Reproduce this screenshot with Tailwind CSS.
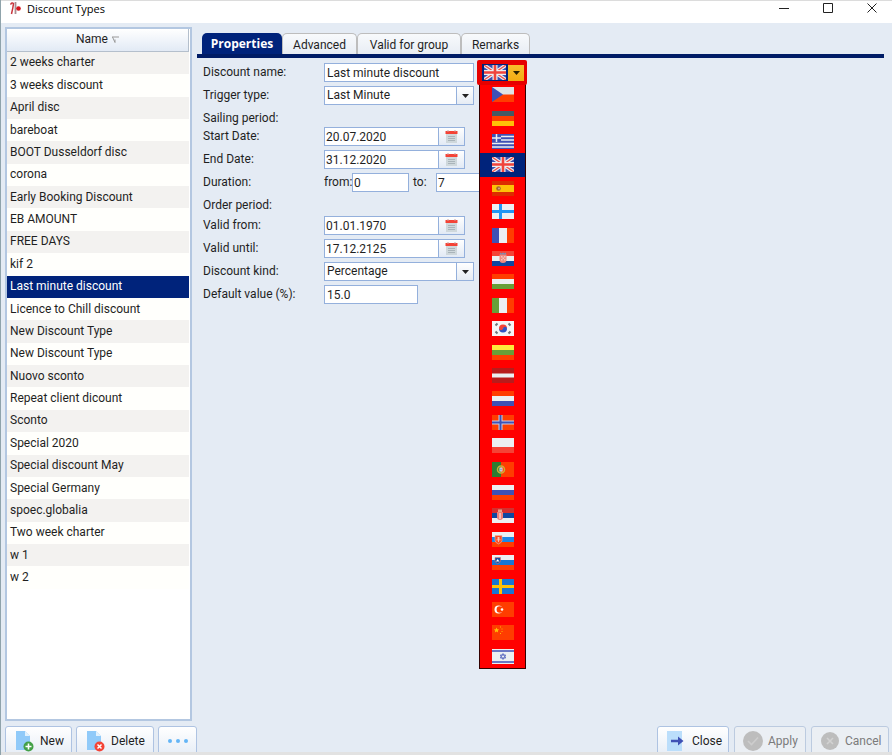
<!DOCTYPE html>
<html lang="en">
  <head>
    <meta charset="UTF-8" />
    <meta name="viewport" content="width=device-width, initial-scale=1.0" />
    <title>Discount Types</title>
    <script src="https://cdn.jsdelivr.net/npm/@tailwindcss/browser@4"></script>
  </head>
  <body
    class="flex flex-col h-screen overflow-hidden bg-[#e4ebf4] border-l border-[#8fa3ab] font-[Roboto,sans-serif] text-[12px] leading-[15px] text-[#1f1f1f]"
  >
    <header
      class="flex shrink-0 items-center justify-between h-[23px] pb-[8px] pl-[9px] bg-white border-t border-[#dcdcdc]"
    >
      <div class="flex items-center gap-[6px]">
        <svg class="w-[11px] h-[13px]" viewBox="0 0 11 13" fill="none">
          <path d="M0.5 2.5 Q2 0 3.5 1.5 Q3 6 1.5 12" stroke="#c8343c" stroke-width="1.5" />
          <path d="M5.500 0V12" stroke="#a98c90" stroke-width="1.8" />
          <circle cx="8.500" cy="6.500" r="2.3" fill="#d4141c" />
        </svg>
        <h1 class="font-['Open_Sans',sans-serif] text-[11px] text-black">Discount Types</h1>
      </div>
      <div class="flex items-center gap-[34px] pr-[15px]">
        <button aria-label="Minimize">
          <svg class="w-[10px] h-[10px]" viewBox="0 0 10 10"><path d="M0 5.500H10" stroke="#222" /></svg>
        </button>
        <button aria-label="Maximize">
          <svg class="w-[10px] h-[10px]" viewBox="0 0 10 10"><path d="M.5.5h9v9h-9z" fill="none" stroke="#222" /></svg>
        </button>
        <button aria-label="Close window">
          <svg class="w-[10px] h-[10px]" viewBox="0 0 10 10"><path d="M.5.5l9 9M9.500.5l-9 9" stroke="#222" /></svg>
        </button>
      </div>
    </header>

    <main class="flex flex-1 min-h-0 pt-[4px] pb-[5px] pl-[4px]">
      <aside class="shrink-0 w-[187px] bg-white border-2 border-[#b3c7e1] pr-[1px] overflow-hidden">
        <table class="w-full h-[560px] border-collapse">
          <thead>
            <tr>
              <th
                class="h-[22px] p-0 font-normal bg-linear-to-b from-white to-[#e2eaf5] border-b border-r border-[#b4bfcc]"
              >
                <button class="inline-flex items-center gap-[4px]">
                  Name
                  <svg class="w-[7px] h-[7px]" viewBox="0 0 7 7"><path d="M0 1H7M.5 1L3 6.500V3.500" fill="none" stroke="#999" /></svg>
                </button>
              </th>
            </tr>
          </thead>
          <tbody id="discounts"></tbody>
        </table>
      </aside>

      <section class="flex-1 pt-[6px] pl-[5px] pr-[8px]">
        <div class="flex h-[21px] pl-[5px]" role="tablist">
          <button
            role="tab"
            aria-selected="true"
            class="w-[80px] rounded-t-[5px] bg-[#00237b] text-white font-bold font-['Open_Sans',sans-serif] text-[12px]"
          >
            Properties
          </button>
          <button role="tab" class="w-[75px] pt-[2px] rounded-t-[5px] border border-b-0 border-[#bdbdbd] bg-linear-to-b from-[#f8fafc] to-[#e8edf4]">
            Advanced
          </button>
          <button role="tab" class="w-[104px] pt-[2px] rounded-t-[5px] border border-b-0 border-[#bdbdbd] bg-linear-to-b from-[#f8fafc] to-[#e8edf4]">
            Valid for group
          </button>
          <button role="tab" class="w-[69px] pt-[2px] rounded-t-[5px] border border-b-0 border-[#bdbdbd] bg-linear-to-b from-[#f8fafc] to-[#e8edf4]">
            Remarks
          </button>
        </div>
        <div class="h-[4px] bg-[#001c66]"></div>

        <form class="pl-[6px] pt-[5px]">
          <div class="grid gap-[4px]">
            <div class="flex items-center h-[19px]">
              <label for="name" class="w-[121px]">Discount name:</label>
              <input id="name" value="Last minute discount" class="w-[150px] h-[19px] px-[2px] bg-white border border-[#94b0dc]" />
              <div class="relative z-10 ml-[3px]">
                <button
                  type="button"
                  aria-label="Language"
                  class="relative z-10 flex items-center w-[50px] h-[25px] pl-[5px] bg-[#e60000] rounded-[2px]"
                >
                  <span class="flex items-center justify-center w-[26px] h-[17px] bg-[#00237b]" id="currentFlag"></span>
                  <span class="flex items-center justify-center w-[16px] h-[16px] bg-linear-to-b from-[#f8bd2c] to-[#f3ab10]">
                    <svg class="w-[7px] h-[4px]" viewBox="0 0 7 4"><path d="M0 0h7L3.500 4z" fill="#2a2000" /></svg>
                  </span>
                </button>
                <ul
                  id="flags"
                  role="listbox"
                  aria-label="Languages"
                  class="absolute top-[22px] left-[2px] grid auto-rows-fr w-[47px] h-[587px] bg-[#ff0000] border border-[#300]"
                ></ul>
              </div>
            </div>
            <div class="flex items-center h-[19px]">
              <label for="trigger" class="w-[121px]">Trigger type:</label>
              <div class="relative">
                <select id="trigger" class="block appearance-none w-[150px] h-[19px] px-[2px] bg-white border border-[#94b0dc]">
                  <option>Last Minute</option>
                </select>
                <span class="absolute inset-y-0 right-0 flex items-center justify-center w-[18px] border border-[#94b0dc] bg-linear-to-b from-white to-[#e6ecf4] pointer-events-none">
                  <svg class="w-[7px] h-[4px]" viewBox="0 0 7 4"><path d="M0 0h7L3.500 4z" fill="#222" /></svg>
                </span>
              </div>
            </div>
          </div>

          <h2 class="h-[22px] pt-[6px]">Sailing period:</h2>
          <div class="grid gap-[4px]">
            <div class="flex items-center h-[19px]">
              <label for="start" class="w-[121px]">Start Date:</label>
              <input id="start" value="20.07.2020" class="w-[115px] h-[19px] px-[1px] bg-white border border-[#94b0dc]" />
              <button type="button" aria-label="Pick start date" class="calendar flex items-center justify-center w-[26px] h-[19px] border border-l-0 border-[#94b0dc] bg-linear-to-b from-white to-[#e2eaf5]"></button>
            </div>
            <div class="flex items-center h-[19px]">
              <label for="end" class="w-[121px]">End Date:</label>
              <input id="end" value="31.12.2020" class="w-[115px] h-[19px] px-[1px] bg-white border border-[#94b0dc]" />
              <button type="button" aria-label="Pick end date" class="calendar flex items-center justify-center w-[26px] h-[19px] border border-l-0 border-[#94b0dc] bg-linear-to-b from-white to-[#e2eaf5]"></button>
            </div>
            <div class="flex items-center h-[19px]">
              <span class="w-[121px]">Duration:</span>
              <label for="from" class="w-[28px]">from:</label>
              <input id="from" value="0" class="w-[57px] h-[19px] px-[1px] bg-white border border-[#94b0dc]" />
              <label for="to" class="w-[27px] pl-[4px]">to:</label>
              <input id="to" value="7" class="w-[57px] h-[19px] px-[1px] bg-white border border-[#94b0dc]" />
            </div>
          </div>

          <h2 class="h-[24px] pt-[6px]">Order period:</h2>
          <div class="grid gap-[4px]">
            <div class="flex items-center h-[19px]">
              <label for="validFrom" class="w-[121px]">Valid from:</label>
              <input id="validFrom" value="01.01.1970" class="w-[115px] h-[19px] px-[1px] bg-white border border-[#94b0dc]" />
              <button type="button" aria-label="Pick valid from" class="calendar flex items-center justify-center w-[26px] h-[19px] border border-l-0 border-[#94b0dc] bg-linear-to-b from-white to-[#e2eaf5]"></button>
            </div>
            <div class="flex items-center h-[19px]">
              <label for="validUntil" class="w-[121px]">Valid until:</label>
              <input id="validUntil" value="17.12.2125" class="w-[115px] h-[19px] px-[1px] bg-white border border-[#94b0dc]" />
              <button type="button" aria-label="Pick valid until" class="calendar flex items-center justify-center w-[26px] h-[19px] border border-l-0 border-[#94b0dc] bg-linear-to-b from-white to-[#e2eaf5]"></button>
            </div>
            <div class="flex items-center h-[19px]">
              <label for="kind" class="w-[121px]">Discount kind:</label>
              <div class="relative">
                <select id="kind" class="block appearance-none w-[150px] h-[19px] px-[2px] bg-white border border-[#94b0dc]">
                  <option>Percentage</option>
                </select>
                <span class="absolute inset-y-0 right-0 flex items-center justify-center w-[18px] border border-[#94b0dc] bg-linear-to-b from-white to-[#e6ecf4] pointer-events-none">
                  <svg class="w-[7px] h-[4px]" viewBox="0 0 7 4"><path d="M0 0h7L3.500 4z" fill="#222" /></svg>
                </span>
              </div>
            </div>
            <div class="flex items-center h-[19px]">
              <label for="value" class="w-[121px]">Default value (%):</label>
              <input id="value" value="15.0" class="w-[94px] h-[19px] px-[2px] bg-white border border-[#94b0dc]" />
            </div>
          </div>
        </form>
      </section>
    </main>

    <footer class="flex shrink-0 justify-between h-[29px] pl-[4px] pr-[3px] border-b-3 border-[#e2e2e2] overflow-hidden">
      <div class="flex gap-[4px]">
        <button class="flex items-center gap-[6px] w-[67px] h-[30px] pl-[9px] rounded-[3px] border border-[#aec3e2] bg-linear-to-b from-white to-[#e6edf6]">
          <svg class="w-[19px] h-[21px]" viewBox="0 0 19 21">
            <path d="M1 0h9l5 5v14H1z" fill="#90caf9" />
            <path d="M10 0v5h5z" fill="#e1f1fd" />
            <circle cx="13.500" cy="15.500" r="5" fill="#43a047" />
            <path d="M13.500 12.500v6M10.500 15.500h6" stroke="#fff" stroke-width="1.600" />
          </svg>
          New
        </button>
        <button class="flex items-center gap-[6px] w-[78px] h-[30px] pl-[9px] rounded-[3px] border border-[#aec3e2] bg-linear-to-b from-white to-[#e6edf6]">
          <svg class="w-[19px] h-[21px]" viewBox="0 0 19 21">
            <path d="M1 0h9l5 5v14H1z" fill="#90caf9" />
            <path d="M10 0v5h5z" fill="#e1f1fd" />
            <circle cx="13.500" cy="15.500" r="5" fill="#f44336" />
            <path d="M11.500 13.500l4 4M15.500 13.500l-4 4" stroke="#fff" stroke-width="1.500" />
          </svg>
          Delete
        </button>
        <button aria-label="More" class="flex items-center justify-center w-[39px] h-[30px] rounded-[3px] border border-[#aec3e2] bg-linear-to-b from-white to-[#e6edf6]">
          <svg class="w-[20px] h-[4px]" viewBox="0 0 20 4" fill="#64b5f6">
            <circle cx="2" cy="2" r="2" />
            <circle cx="10" cy="2" r="2" />
            <circle cx="18" cy="2" r="2" />
          </svg>
        </button>
      </div>
      <div class="flex gap-[5px]">
        <button class="flex items-center gap-[7px] w-[72px] h-[30px] pl-[9px] rounded-[3px] border border-[#aec3e2] bg-linear-to-b from-white to-[#e6edf6]">
          <svg class="w-[18px] h-[20px]" viewBox="0 0 18 20">
            <path d="M0 0h15v20H0z" fill="#bbdefb" />
            <path d="M4 8.800h7V5.500l5.500 4.500-5.500 4.500v-3.300H4z" fill="#3f51b5" />
          </svg>
          Close
        </button>
        <button disabled class="flex items-center gap-[5px] w-[72px] h-[30px] pl-[8px] rounded-[3px] border border-[#bccbe0] bg-[#ebeff4] text-[#7b7b7b]">
          <svg class="w-[20px] h-[20px]" viewBox="0 0 20 20" fill="none">
            <circle cx="10" cy="10" r="10" fill="#bdbdbd" />
            <path d="M5 10l3.500 3.500L15 6.500" stroke="#cdcdcd" stroke-width="1.600" />
          </svg>
          Apply
        </button>
        <button disabled class="flex items-center gap-[6px] w-[78px] h-[30px] pl-[9px] rounded-[3px] border border-[#bccbe0] bg-[#ebeff4] text-[#7b7b7b]">
          <svg class="w-[18px] h-[18px]" viewBox="0 0 18 18" fill="none">
            <circle cx="9" cy="9" r="9" fill="#bdbdbd" />
            <path d="M6 6l6 6M12 6l-6 6" stroke="#d2d2d2" stroke-width="1.600" />
          </svg>
          Cancel
        </button>
      </div>
    </footer>

    <script>
      const discounts = [
        "2 weeks charter",
        "3 weeks discount",
        "April disc",
        "bareboat",
        "BOOT Dusseldorf disc",
        "corona",
        "Early Booking Discount",
        "EB AMOUNT",
        "FREE DAYS",
        "kif 2",
        "Last minute discount",
        "Licence to Chill discount",
        "New Discount Type",
        "New Discount Type",
        "Nuovo sconto",
        "Repeat client dicount",
        "Sconto",
        "Special 2020",
        "Special discount May",
        "Special Germany",
        "spoec.globalia",
        "Two week charter",
        "w 1",
        "w 2",
      ];
      const selected = 10;

      document.getElementById("discounts").innerHTML = discounts
        .map((name, i) => {
          const color =
            i === selected
              ? "bg-[#00237b] text-white"
              : i % 2
                ? "bg-[#fffffc]"
                : "bg-[#f3f2f0]";
          return `<tr class="${color}"><td class="p-0 pl-[3px]">${name}</td></tr>`;
        })
        .join("");

      // flags are drawn on a 22x15 canvas
      const rows = (a, b, c) =>
        `<path d="M0 0h22v5H0z" fill="${a}"/><path d="M0 5h22v5H0z" fill="${b}"/><path d="M0 10h22v5H0z" fill="${c}"/>`;
      const cols = (a, b, c) =>
        `<path d="M0 0h7v15H0z" fill="${a}"/><path d="M7 0h8v15H7z" fill="${b}"/><path d="M15 0h7v15h-7z" fill="${c}"/>`;
      const fill = (c) => `<path d="M0 0h22v15H0z" fill="${c}"/>`;
      const cross = (x, c, w) =>
        `<path d="M${x} 0v15M0 7.500h22" stroke="${c}" stroke-width="${w}"/>`;

      const uk =
        fill("#3a4fb0") +
        `<path d="M0 0l22 15M22 0L0 15" stroke="#eceff1" stroke-width="3.600"/><path d="M0 0l22 15M22 0L0 15" stroke="#f0504a" stroke-width="1.300"/>` +
        cross(11, "#eceff1", 5) +
        cross(11, "#f0443c", 2.6);

      const flags = [
        ["Czech", fill("#dfe3e6") + `<path d="M0 7.500h22v7.500H0z" fill="#ff3d00"/><path d="M0 0l11 7.500L0 15z" fill="#3f51b5"/>`],
        ["German", rows("#455a64", "#ff3d00", "#ffc107")],
        [
          "Greek",
          fill("#3f51b5") +
            `<path d="M0 2.500h22M0 6h22M0 9.500h22M0 13h22" stroke="#eceff1" stroke-width="1.500"/><path d="M0 0h9v8H0z" fill="#3f51b5"/><path d="M4.500 0v8M0 4h9" stroke="#eceff1" stroke-width="1.500"/>`,
        ],
        ["English", uk],
        [
          "Spanish",
          fill("#dd2c00") +
            `<path d="M0 4h22v7H0z" fill="#ffc107"/><circle cx="6.500" cy="7.500" r="2.300" fill="#a1662f"/><circle cx="7" cy="7.500" r="1" fill="#d9a090"/>`,
        ],
        ["Finnish", fill("#eceff1") + cross(8.5, "#2196f3", 3)],
        ["French", cols("#3f51b5", "#eceff1", "#ff3d00")],
        [
          "Croatian",
          rows("#f44336", "#eceff1", "#0d47a1") +
            `<path d="M7.500 3.500h7v5a3.500 3.500 0 0 1-7 0z" fill="#ef8a80"/><path d="M8 3.500V1.500l1.500 1 1.500-1 1.500 1 1.500-1v2z" fill="#7d8fb5"/><path d="M9 5h1.500v1.500H9zM12 5h1.500v1.500H12zM10.500 6.500H12V8h-1.500zM9 8h1.500v1.500H9zM12 8h1.500v1.500H12z" fill="#f5c4be"/>`,
        ],
        ["Hungarian", rows("#ff3d00", "#eceff1", "#689f38")],
        ["Italian", cols("#689f38", "#eceff1", "#ff3d00")],
        [
          "Korean",
          fill("#f5f5f5") +
            `<path d="M7 7.500a4 4 0 0 1 8 0z" fill="#f44336"/><path d="M7 7.500a4 4 0 0 0 8 0z" fill="#2f55c4"/><circle cx="9" cy="7.500" r="1.800" fill="#f44336"/><circle cx="13" cy="7.500" r="1.800" fill="#2f55c4"/><path d="M3.500 4.500l2-2M16.500 2.500l2 2M3.500 10.500l2 2M16.500 12.500l2-2" stroke="#6d7478" stroke-width="2"/>`,
        ],
        ["Lithuanian", rows("#ffeb3b", "#689f38", "#ff3d00")],
        ["Latvian", fill("#b71c1c") + `<path d="M0 5.500h22v4H0z" fill="#eceff1"/>`],
        ["Dutch", rows("#ff3d00", "#eceff1", "#3f51b5")],
        ["Norwegian", fill("#ff3d00") + cross(8.5, "#c9cfe8", 4) + cross(8.5, "#3f51b5", 2)],
        ["Polish", fill("#eceff1") + `<path d="M0 9h22v6H0z" fill="#f44336"/>`],
        [
          "Portuguese",
          fill("#ff3d00") +
            `<path d="M0 0h9v15H0z" fill="#2e7d32"/><circle cx="9" cy="7.500" r="3.500" fill="none" stroke="#c9b037" stroke-width="1.500"/><path d="M7.500 5.500h3v4h-3z" fill="#eceff1"/><path d="M8.500 6.500h1v2h-1z" fill="#3f51b5"/>`,
        ],
        ["Russian", rows("#eceff1", "#3f51b5", "#ff3d00")],
        [
          "Serbian",
          rows("#d32f2f", "#0d47a1", "#eceff1") +
            `<path d="M5 4h6v5a3 3 0 0 1-6 0z" fill="#ef7d75"/><path d="M7.300 5h1.500v6H7.300z" fill="#f5d0cc"/><path d="M6 1.500h4V4H6z" fill="#e5a48c"/>`,
        ],
        [
          "Slovak",
          rows("#eceff1", "#1e88e5", "#ff3d00") +
            `<path d="M3 3.500h7v5q0 2-3.500 3.500Q3 10.500 3 8.500z" fill="#ff4a20" stroke="#e6b8b0" stroke-width=".6"/><path d="M6.500 5v5M5 6h3M4.500 7.800h4" stroke="#f5d5d0" stroke-width=".8"/>`,
        ],
        [
          "Slovenian",
          rows("#eceff1", "#1976d2", "#ff3d00") +
            `<path d="M3 2.500h5.500v3q0 2-2.800 3.200Q3 7.500 3 5.500z" fill="#1551a0" stroke="#e57373" stroke-width=".6"/><path d="M4 6.500l1.700-2.500 1.700 2.500z" fill="#fff"/>`,
        ],
        ["Swedish", fill("#1976d2") + cross(8.5, "#ffc107", 3)],
        [
          "Turkish",
          fill("#ff3d00") +
            `<circle cx="6.500" cy="7.500" r="4" fill="#fff"/><circle cx="7.800" cy="7.500" r="3.200" fill="#ff3d00"/><circle cx="10" cy="7.500" r="1.300" fill="#fff"/>`,
        ],
        [
          "Chinese",
          fill("#ff3d00") +
            `<path d="M4.500 2.500l.8 1.700 1.800.2-1.300 1.300.3 1.800-1.600-.9-1.600.9.300-1.800L1.900 4.400l1.800-.2z" fill="#ffc107"/><path d="M8 1.500h1v1H8zM9.500 3.500h1v1h-1zM9.500 6h1v1h-1zM8 8h1v1H8z" fill="#ffb300"/>`,
        ],
        [
          "Hebrew",
          fill("#eceff1") +
            `<path d="M0 2h22M0 13h22" stroke="#3f51b5" stroke-width="1.500"/><path d="M11 4.500l2.700 4.500H8.300zM11 10.500L8.300 6h5.400z" fill="none" stroke="#5c6bc0" stroke-width=".9"/>`,
        ],
      ];

      const flagSvg = (shape) =>
        `<svg class="w-[22px] h-[15px]" viewBox="0 0 22 15">${shape}</svg>`;

      document.getElementById("currentFlag").innerHTML = flagSvg(uk);
      document.getElementById("flags").innerHTML = flags
        .map(([lang, shape]) => {
          const active = lang === "English";
          return `<li role="option" aria-label="${lang}" aria-selected="${active}" class="flex items-center justify-center ${
            active ? "bg-[#00237b]" : ""
          }">${flagSvg(shape)}</li>`;
        })
        .join("");

      document.querySelectorAll(".calendar").forEach((button) => {
        button.innerHTML = `
          <svg class="w-[13px] h-[13px]" viewBox="0 0 13 13">
            <path d="M1 4h11v9H1z" fill="#cfd8dc"/>
            <path d="M.5 1h12v3H.5z" fill="#f44336"/>
            <path d="M3 0v2M10 0v2" stroke="#c9a0a0"/>
            <path d="M3 6.500h7M3 8.500h7M3 10.500h7" stroke="#a9b4ba"/>
          </svg>`;
      });
    </script>
  </body>
</html>
